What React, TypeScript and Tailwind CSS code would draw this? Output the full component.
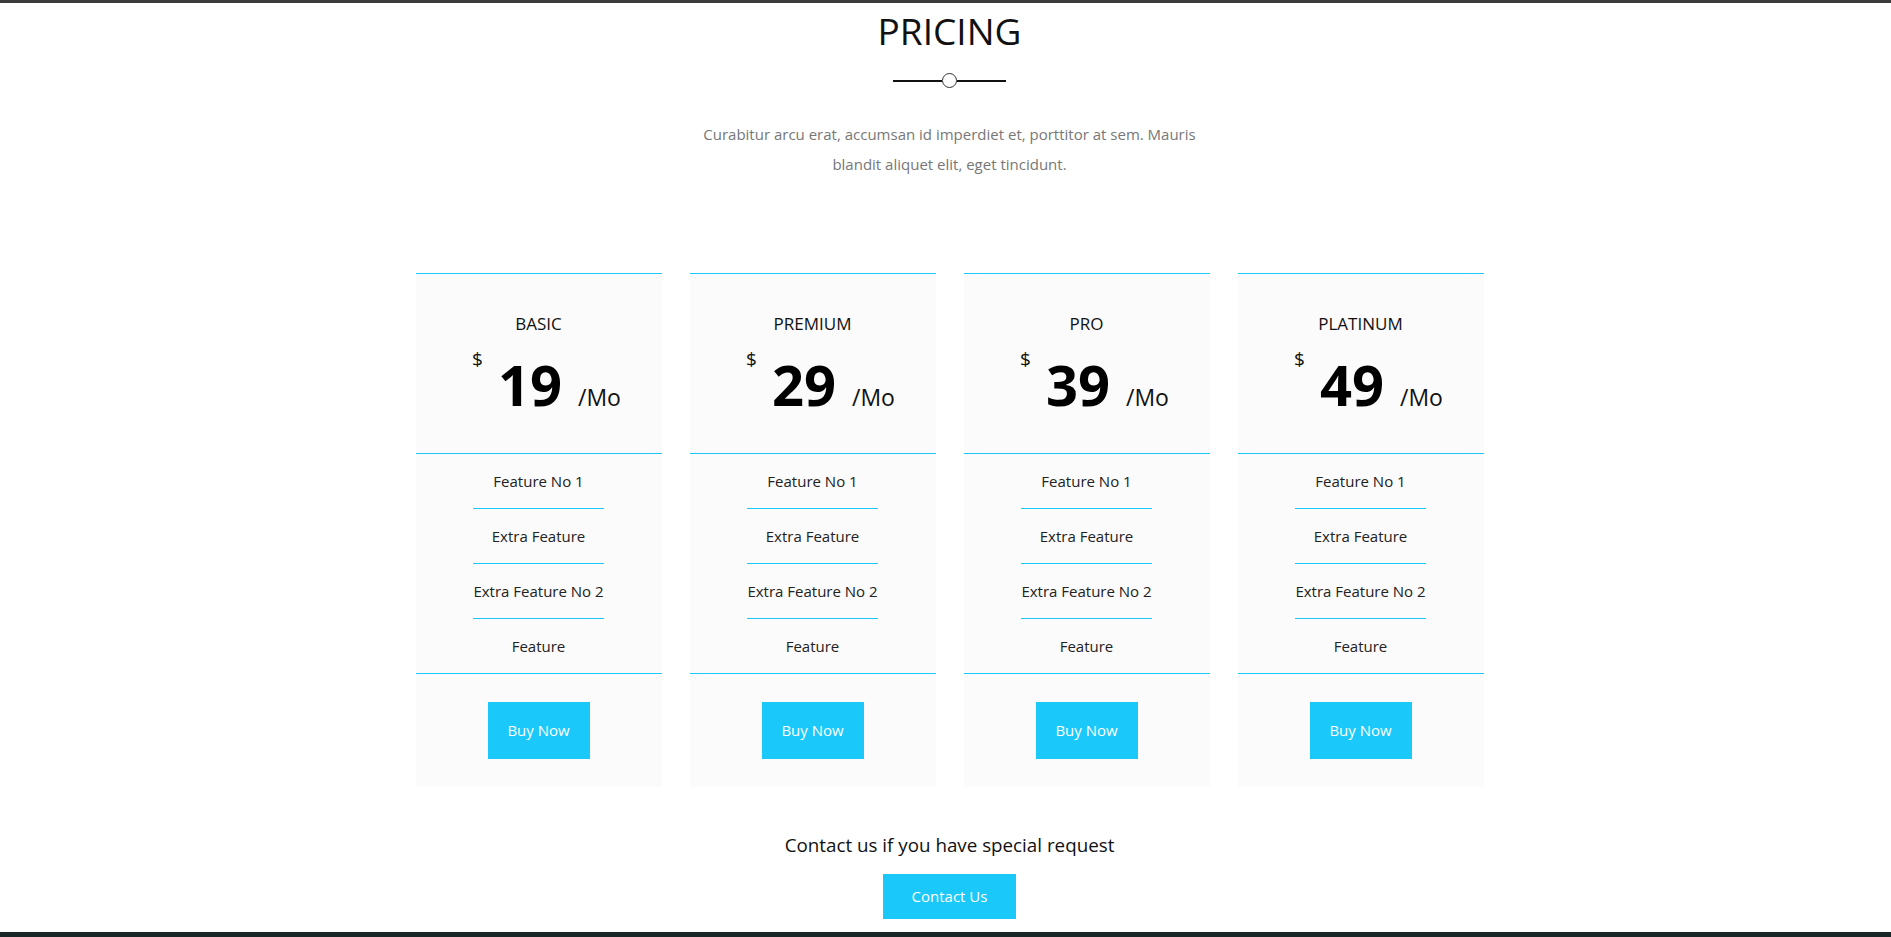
import React from 'react'

interface Plan {
  name: string
  price: string
}

const PLANS: Plan[] = [
  { name: 'BASIC', price: '19' },
  { name: 'PREMIUM', price: '29' },
  { name: 'PRO', price: '39' },
  { name: 'PLATINUM', price: '49' }
]

const FEATURES = ['Feature No 1', 'Extra Feature', 'Extra Feature No 2', 'Feature']

const PricingCard = ({ plan }: { plan: Plan }) => {
  return (
    <div className="w-[246px] bg-[#fbfbfb] border-t border-[#1ac8f9] flex flex-col">
      {/* header */}
      <div className="h-[180px] border-b border-[#1ac8f9] pt-[38px] flex flex-col items-center">
        <h3 className="text-[17px] leading-[24px] text-[#111] uppercase">{plan.name}</h3>
        <div className="mt-[20px] flex items-baseline justify-center pl-[16px]">
          <span className="relative -top-[40px] text-[19px] leading-none text-[#111] mr-[15px]">$</span>
          <span className="text-[56px] leading-[56px] font-bold text-black">{plan.price}</span>
          <span className="text-[23px] leading-none text-[#111] ml-[16px]">/Mo</span>
        </div>
      </div>

      {/* features */}
      <ul className="flex flex-col items-center">
        {FEATURES.map((f, i) => (
          <li
            key={i}
            className={`w-[131px] flex items-center justify-center text-[15px] text-[#222] whitespace-nowrap ${
              i < FEATURES.length - 1 ? 'h-[55px] border-b border-[#1ac8f9]' : 'h-[54px]'
            }`}
          >
            {f}
          </li>
        ))}
      </ul>

      {/* footer */}
      <div className="h-[114px] border-t border-[#1ac8f9] flex items-center justify-center">
        <button className="w-[102px] h-[57px] bg-[#1ac8f9] text-white text-[15px]">Buy Now</button>
      </div>
    </div>
  )
}

export default function App() {
  return (
    <div
      className="w-full min-h-screen bg-white border-t-[3px] border-[#3b3b3b] overflow-hidden"
      style={{ fontFamily: '"Open Sans", "Liberation Sans", sans-serif' }}
    >
      <section className="pl-[8px] flex flex-col items-center">
        <h2 className="mt-[9px] text-[37px] leading-[37px] text-[#111]">PRICING</h2>

        <div className="mt-[24px] flex items-center">
          <div className="w-[49px] h-[2px] bg-[#111]" />
          <div className="w-[15px] h-[15px] rounded-full border border-[#333] bg-white" />
          <div className="w-[49px] h-[2px] bg-[#111]" />
        </div>

        <p className="mt-[31px] w-[510px] text-center text-[15px] leading-[30px] text-[#777]">
          Curabitur arcu erat, accumsan id imperdiet et, porttitor at sem. Mauris blandit aliquet elit, eget tincidunt.
        </p>

        <div className="mt-[94px] flex gap-[28px]">
          {PLANS.map((p) => (
            <PricingCard key={p.name} plan={p} />
          ))}
        </div>

        <p className="mt-[45px] text-[18.8px] leading-[27px] text-[#111]">Contact us if you have special request</p>
        <button className="mt-[15px] w-[133px] h-[45px] bg-[#1ac8f9] text-white text-[15px]">Contact Us</button>
      </section>

      <div className="mt-[13px] h-[40px] bg-[#172726]" />
    </div>
  )
}
